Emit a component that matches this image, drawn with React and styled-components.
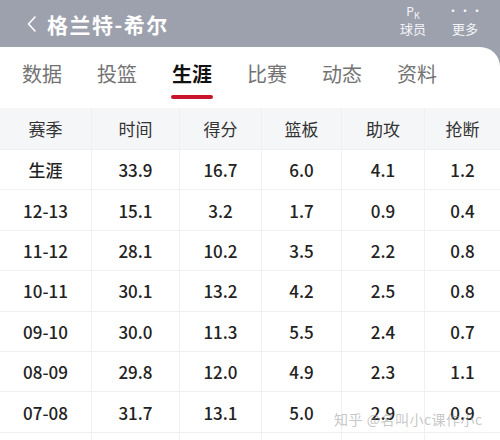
import styled, { createGlobalStyle } from "styled-components";

const GlobalStyle = createGlobalStyle`
  html, body {
    margin: 0;
    padding: 0;
  }
  body {
    font-family: "Noto Sans CJK SC", "Noto Sans", sans-serif;
  }
`;

const Page = styled.div`
  width: 500px;
  height: 440px;
  overflow: hidden;
  background: #9da1ad;
  position: relative;
`;

const TopBar = styled.div`
  height: 47px;
  display: flex;
  align-items: center;
  padding-left: 26px;
  padding-right: 20px;
  color: #fff;
`;

const BackIcon = styled.svg`
  width: 12px;
  height: 18px;
  margin-right: 9px;
`;

const Title = styled.div`
  font-size: 21px;
  font-weight: 700;
  letter-spacing: 1.5px;
  flex: 1;
`;

const Action = styled.div`
  display: flex;
  flex-direction: column;
  align-items: center;
  width: 30px;
  margin-left: 22px;
  font-size: 13px;
  line-height: 16px;
  color: #f4f5f8;
`;

const ActionIcon = styled.div`
  height: 14px;
  font-size: 12px;
  line-height: 12px;
  margin-top: -6px;
  margin-bottom: 2px;
`;

const Sub = styled.span`
  font-size: 9px;
  vertical-align: -3px;
`;

const Panel = styled.div`
  background: #fff;
  border-top-right-radius: 20px;
  height: 393px;
  overflow: hidden;
`;

const Tabs = styled.div`
  height: 53px;
  display: flex;
  padding-left: 21px;
  gap: 33px;
`;

const Tab = styled.div`
  position: relative;
  width: 42px;
  font-size: 20px;
  line-height: 53px;
  color: ${(p) => (p.$active ? "#111" : "#737373")};
  font-weight: ${(p) => (p.$active ? 700 : 400)};
  text-align: center;
  &::after {
    content: "";
    display: ${(p) => (p.$active ? "block" : "none")};
    position: absolute;
    left: 0;
    right: 0;
    bottom: 1px;
    height: 4px;
    border-radius: 2px;
    background: #c9152c;
  }
`;

const Table = styled.div`
  margin-top: 8px;
  display: grid;
  grid-template-columns: 92px 88px 82px 80px 83px 75px;
`;

const Cell = styled.div`
  height: ${(p) => (p.$head ? "42px" : "40.4px")};
  box-sizing: border-box;
  display: flex;
  align-items: center;
  justify-content: center;
  background: ${(p) => (p.$head ? "#f5f6f8" : "#fff")};
  border-right: 1px solid #f0f0f2;
  border-bottom: 1px solid #f0f0f2;
  font-size: 17px;
  font-weight: ${(p) => (p.$head ? 400 : 500)};
  color: ${(p) => (p.$head ? "#333" : "#222")};
  &:nth-child(6n) {
    border-right: none;
  }
`;

const Watermark = styled.div`
  position: absolute;
  left: 334px;
  top: 409px;
  font-size: 14px;
  color: rgba(150, 150, 150, 0.55);
  white-space: nowrap;
  letter-spacing: 0.5px;
`;

const headers = ["赛季", "时间", "得分", "篮板", "助攻", "抢断"];

const rows = [
  ["生涯", "33.9", "16.7", "6.0", "4.1", "1.2"],
  ["12-13", "15.1", "3.2", "1.7", "0.9", "0.4"],
  ["11-12", "28.1", "10.2", "3.5", "2.2", "0.8"],
  ["10-11", "30.1", "13.2", "4.2", "2.5", "0.8"],
  ["09-10", "30.0", "11.3", "5.5", "2.4", "0.7"],
  ["08-09", "29.8", "12.0", "4.9", "2.3", "1.1"],
  ["07-08", "31.7", "13.1", "5.0", "2.9", "0.9"],
  ["", "", "", "", "", ""],
];

const tabs = ["数据", "投篮", "生涯", "比赛", "动态", "资料"];

export default function App() {
  return (
    <Page>
      <GlobalStyle />
      <TopBar>
        <BackIcon viewBox="0 0 12 18">
          <path d="M9 2 L2.5 9 L9 16" fill="none" stroke="#fff" strokeWidth="1.6" strokeLinecap="round" strokeLinejoin="round" />
        </BackIcon>
        <Title>格兰特-希尔</Title>
        <Action>
          <ActionIcon>
            P<Sub>K</Sub>
          </ActionIcon>
          球员
        </Action>
        <Action>
          <ActionIcon>···</ActionIcon>
          更多
        </Action>
      </TopBar>
      <Panel>
        <Tabs>
          {tabs.map((t) => (
            <Tab key={t} $active={t === "生涯"}>
              {t}
            </Tab>
          ))}
        </Tabs>
        <Table>
          {headers.map((h) => (
            <Cell key={h} $head>
              {h}
            </Cell>
          ))}
          {rows.map((r, i) =>
            r.map((v, j) => <Cell key={`${i}-${j}`}>{v}</Cell>)
          )}
        </Table>
      </Panel>
      <Watermark>知乎 @名叫小c课作小c</Watermark>
    </Page>
  );
}
